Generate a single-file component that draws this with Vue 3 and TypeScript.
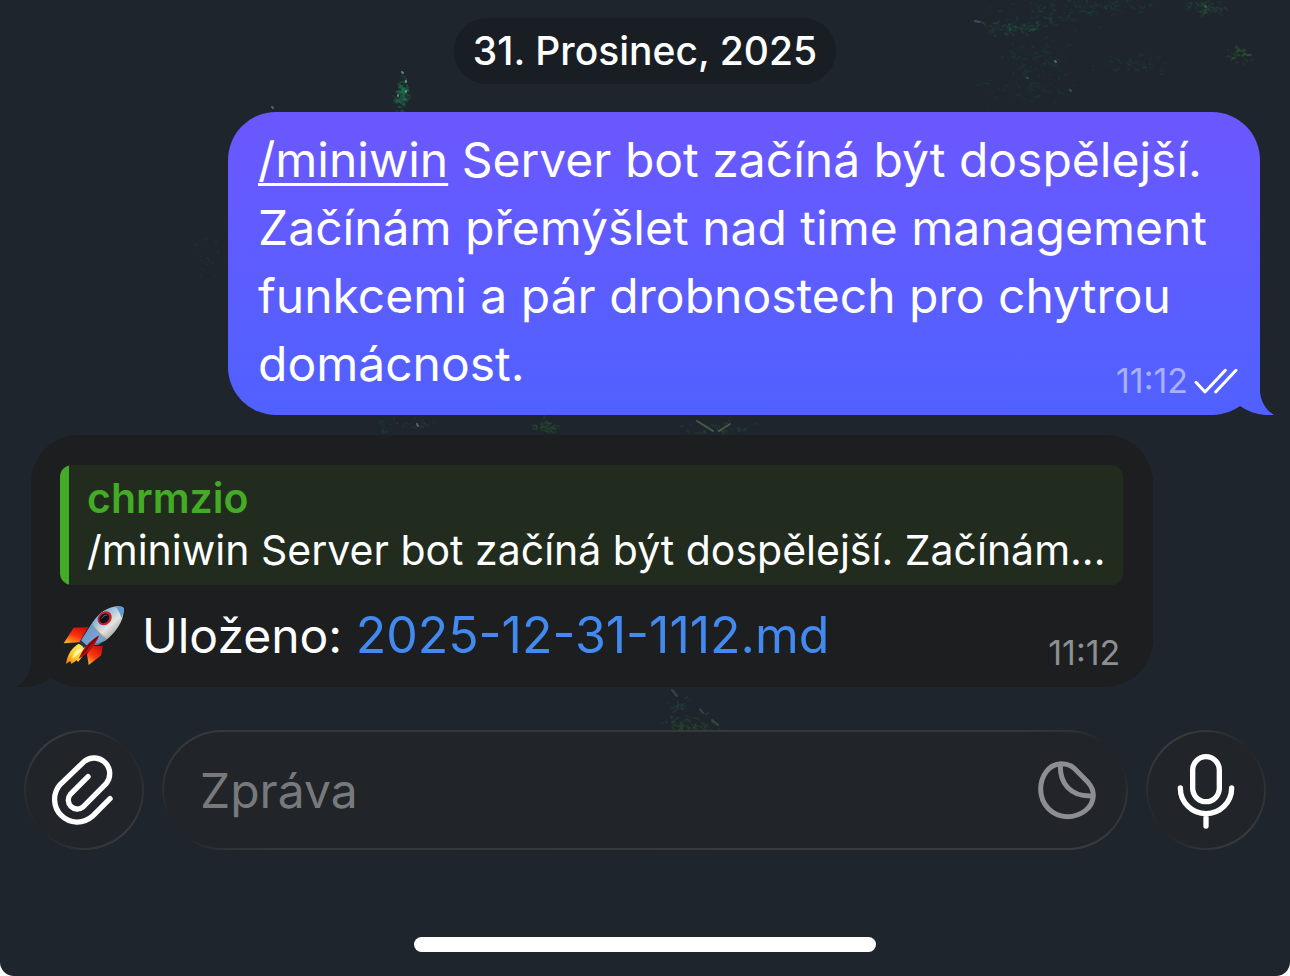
<script setup lang="ts">
import { ref } from 'vue'

interface Cluster { x: number; y: number; w: number; h: number; n: number; color: string; o: number }
interface Mark { d: string; color: string; o: number }

const draft = ref('')

const clusters: Cluster[] = [
  { x: 1045, y: 14, w: 60, h: 20, n: 70, color: '#1c5a40', o: 0.28 },
  { x: 1110, y: 6, w: 55, h: 10, n: 44, color: '#1c5a40', o: 0.3 },
  { x: 1008, y: 28, w: 34, h: 9, n: 50, color: '#1f6b4b', o: 0.32 },
  { x: 1040, y: 58, w: 40, h: 28, n: 80, color: '#1b4a38', o: 0.32 },
  { x: 1020, y: 88, w: 54, h: 20, n: 60, color: '#1c4a36', o: 0.32 },
  { x: 1130, y: 62, w: 44, h: 12, n: 40, color: '#1c4f38', o: 0.3 },
  { x: 1206, y: 8, w: 26, h: 9, n: 44, color: '#28633f', o: 0.32 },
  { x: 1240, y: 55, w: 15, h: 9, n: 30, color: '#2c6a38', o: 0.38 },
  { x: 403, y: 92, w: 5, h: 18, n: 40, color: '#1e7a54', o: 0.5 },
  { x: 403, y: 100, w: 11, h: 14, n: 36, color: '#1f6b4b', o: 0.5 },
  { x: 395, y: 425, w: 40, h: 9, n: 24, color: '#1f5a3e', o: 0.28 },
  { x: 542, y: 425, w: 20, h: 9, n: 30, color: '#2a6a34', o: 0.4 },
  { x: 715, y: 428, w: 44, h: 8, n: 28, color: '#1f5a3e', o: 0.34 },
  { x: 690, y: 724, w: 34, h: 10, n: 44, color: '#286030', o: 0.4 },
  { x: 680, y: 704, w: 14, h: 12, n: 14, color: '#2a5040', o: 0.4 },
  { x: 205, y: 255, w: 16, h: 22, n: 20, color: '#20452f', o: 0.3 },
]

const highlights: Mark[] = [
  { d: 'M697 421L713 431M719 431L730 424', color: '#6f8a68', o: 0.5 },
  { d: 'M672 690L677 696M700 709L703 713M712 720L718 725', color: '#6a7d70', o: 0.35 },
  { d: 'M402 72L403 73M406 81L406 82M398 95L398 96M406 91L406 92', color: '#9cc4ac', o: 0.6 },
  { d: 'M272 107L273 108M417 424L418 426M1055 61L1056 62', color: '#8ba699', o: 0.5 },
  { d: 'M975 21L979 22M1027 78L1028 78M1070 90L1071 91M1205 6L1206 7', color: '#7d9a8a', o: 0.35 },
]

let seed = 31
function rand(): number {
  seed = (seed * 16807) % 2147483647
  return seed / 2147483647
}

const marks: Mark[] = clusters.flatMap((c) =>
  Array.from({ length: c.n }, () => {
    const x = c.x + (rand() + rand() - 1) * c.w
    const y = c.y + (rand() + rand() - 1) * c.h
    const dx = (rand() - 0.5) * 8
    const dy = (rand() - 0.4) * 5
    return { d: `M${x.toFixed(1)} ${y.toFixed(1)}l${dx.toFixed(1)} ${dy.toFixed(1)}`, color: c.color, o: c.o * (0.4 + rand() * 0.6) }
  }),
).concat(highlights)
</script>

<template>
  <main class="chat">
    <svg class="wallpaper" viewBox="0 0 1290 976" preserveAspectRatio="xMidYMin slice" aria-hidden="true">
      <path v-for="(m, i) in marks" :key="i" :d="m.d" fill="none" :stroke="m.color" :opacity="m.o" stroke-width="2" stroke-linecap="round" />
    </svg>

    <section class="messages">
      <time class="date" datetime="2025-12-31">31. Prosinec, 2025</time>

      <article class="bubble outgoing">
        <p class="text"><a href="#miniwin">/miniwin</a> Server bot začíná být dospělejší. Začínám přemýšlet nad time management funkcemi a pár drobnostech pro chytrou domácnost.</p>
        <div class="meta">
          <time>11:12</time>
          <svg class="checks" viewBox="584 112 132 78" role="img" aria-label="Přečteno">
            <path d="M590 155L617 184L678 119M649 184L710 119" fill="none" stroke="#fff" stroke-width="9" stroke-linecap="round" stroke-linejoin="round" />
          </svg>
        </div>
        <svg class="tail" viewBox="0 0 62 60" aria-hidden="true">
          <path d="M48 0V37C49 47 54 55 62 60C50 61 38 58 28 51L20 30Z" fill="#5160ff" />
        </svg>
      </article>

      <article class="bubble incoming">
        <blockquote class="quote">
          <strong>chrmzio</strong>
          <span>/miniwin Server bot začíná být dospělejší. Začínám...</span>
        </blockquote>
        <div class="saved">
          <svg class="rocket" viewBox="66 42 186 186" role="img" aria-label="🚀">
            <defs>
              <linearGradient id="hull" x1="0" y1="0" x2="1" y2="1">
                <stop offset="0.1" stop-color="#4f86bf" />
                <stop offset="0.35" stop-color="#8db6dc" />
                <stop offset="0.58" stop-color="#e4e4e0" />
                <stop offset="0.9" stop-color="#77787a" />
              </linearGradient>
              <linearGradient id="fin" x1="0.8" y1="0" x2="0.2" y2="1">
                <stop offset="0" stop-color="#c90d08" />
                <stop offset="0.55" stop-color="#fb3510" />
                <stop offset="1" stop-color="#ffae28" />
              </linearGradient>
              <linearGradient id="flame" x1="1" y1="0" x2="0" y2="1">
                <stop offset="0" stop-color="#fff08a" />
                <stop offset="0.6" stop-color="#ffc928" />
                <stop offset="1" stop-color="#f07512" />
              </linearGradient>
            </defs>
            <path d="M145 108L101 110L71 157L118 154Z" fill="url(#fin)" />
            <path d="M188 165L184 193L146 222L141 190L155 164Z" fill="url(#fin)" />
            <path d="M116 158C98 168 82 188 78 219L91 210L94 219L110 208L114 213C128 198 136 183 138 170Z" fill="url(#flame)" />
            <path d="M112 174C104 184 98 193 97 202C110 197 120 187 127 175Z" fill="#fff6a0" />
            <path d="M117 154L124 148L140 161L132 172Z" fill="#26394f" />
            <path d="M251 52C250 47 240 45 232 46C202 48 176 66 158 94L124 148L142 164L194 150C228 126 253 88 251 52Z" fill="url(#hull)" />
            <path d="M124 148L158 94C166 112 184 135 201 144L176 161L142 164Z" fill="#5e94ca" opacity="0.8" />
            <path d="M158 98C169 118 184 132 203 140" fill="none" stroke="#d2b56a" stroke-width="3" />
            <path d="M251 52C250 47 240 45 226 47C234 54 241 66 244 81C249 70 252 62 251 52Z" fill="#5c9bd3" />
            <path d="M178 133C157 145 132 164 116 203C138 193 163 171 178 133Z" fill="#b80f10" />
            <path d="M173 139C155 154 139 172 126 190" fill="none" stroke="#5d0c12" stroke-width="4" />
            <ellipse cx="194" cy="82" rx="23" ry="19" transform="rotate(-43 194 82)" fill="#c71f27" />
            <ellipse cx="193" cy="82" rx="16" ry="13" transform="rotate(-43 193 82)" fill="#0e1218" />
            <path d="M185 83Q190 71 201 72" fill="none" stroke="#50627a" stroke-width="3" />
          </svg>
          <p class="text">Uloženo: <a href="#note">2025-12-31-1112.md</a></p>
        </div>
        <div class="meta"><time>11:12</time></div>
        <svg class="tail" viewBox="0 0 62 60" aria-hidden="true">
          <path d="M14 0V37C13 47 8 55 0 60C12 61 24 58 34 51L42 30Z" fill="#1c1e20" />
        </svg>
      </article>
    </section>

    <form class="composer" @submit.prevent>
      <button class="round" type="button" aria-label="Přiložit">
        <svg viewBox="72 90 360 360" fill="none" stroke="#fff" stroke-width="16" stroke-linecap="round" stroke-linejoin="round">
          <path d="M264 230L211 283A27 27 0 0 0 249 321L319 250A47 47 0 0 0 253 184L181 253A68 68 0 0 0 277 349L330 296" />
        </svg>
      </button>
      <div class="field">
        <input v-model="draft" type="text" placeholder="Zpráva" aria-label="Zpráva" />
        <button class="sticker" type="button" aria-label="Samolepky">
          <svg viewBox="232 182 180 180" fill="none" stroke="#8d8e93" stroke-width="15" stroke-linecap="round" stroke-linejoin="round">
            <path d="M305 193C270 193 243 228 243 270C243 316 279 352 323 352C364 352 400 325 401 288C401 272 395 260 385 249L345 208C334 198 322 193 305 193Z" />
            <path d="M302 195C300 250 330 293 398 290" />
          </svg>
        </button>
      </div>
      <button class="round" type="button" aria-label="Hlasová zpráva">
        <svg viewBox="558 90 360 360" fill="none" stroke="#fff" stroke-width="16" stroke-linecap="round">
          <rect x="698" y="170" width="80" height="135" rx="40" />
          <path d="M661 264A77 77 0 0 0 815 264M738 341V378" />
        </svg>
      </button>
    </form>

    <div class="home"></div>
  </main>
</template>

<style>
body {
  margin: 0;
  background: #fff;
}
</style>

<style scoped>
.chat {
  position: relative;
  box-sizing: border-box;
  min-height: 100vh;
  display: flex;
  flex-direction: column;
  padding: 18px 0 24px;
  overflow: hidden;
  border-radius: 0 0 14px 14px;
  background: #1f252c;
  color: #fff;
  font-family: Inter, "Liberation Sans", sans-serif;
}
.wallpaper {
  position: absolute;
  inset: 0;
  width: 100%;
  height: 100%;
}
.messages {
  position: relative;
  display: flex;
  flex-direction: column;
}
.date {
  align-self: center;
  padding: 0 19px;
  border-radius: 33px;
  background: #181e24;
  font-size: 39px;
  font-weight: 500;
  line-height: 66px;
}
.bubble {
  position: relative;
  box-sizing: border-box;
  border-radius: 48px;
}
.text {
  margin: 0;
  font-size: 48px;
  line-height: 68px;
}
.outgoing {
  align-self: flex-end;
  width: 80%;
  margin: 28px 30px 0 0;
  padding: 14px 30px 17px;
  background: linear-gradient(#6b58ff, #5061ff);
}
.outgoing a {
  color: #fff;
  text-decoration-thickness: 3px;
  text-underline-offset: 6px;
}
.meta {
  position: absolute;
  right: 33px;
  bottom: 14px;
  display: flex;
  align-items: center;
  gap: 6px;
  font-size: 34px;
  line-height: 40px;
  color: #8e8f92;
}
.outgoing .meta {
  right: 22px;
  color: #a9b0ff;
}
.checks {
  width: 44px;
  height: 26px;
}
.tail {
  position: absolute;
  bottom: 0;
  width: 62px;
  height: 60px;
}
.outgoing .tail {
  right: -14px;
}
.incoming .tail {
  left: -14px;
}
.incoming {
  width: 87%;
  margin: 20px 0 0 31px;
  padding: 30px 30px 17px 29px;
  background: #1c1e20;
}
.quote {
  margin: 0;
  padding: 7px 12px 9px 27px;
  border-radius: 12px;
  background: linear-gradient(90deg, #43ab25 9px, #212b1e 9px);
  font-size: 41px;
  line-height: 52px;
}
.quote strong,
.quote span {
  display: block;
  white-space: nowrap;
}
.quote strong {
  color: #43ab25;
  font-weight: 600;
}
.saved {
  display: flex;
  align-items: center;
  gap: 18px;
  padding: 16px 0 0 2px;
}
.rocket {
  width: 62px;
  height: 62px;
}
.saved a {
  color: #438af0;
  font-size: 50px;
  text-decoration: none;
}
.composer {
  position: relative;
  display: flex;
  gap: 18px;
  margin-top: 43px;
  padding: 0 24px;
}
button {
  display: flex;
  align-items: center;
  justify-content: center;
  flex: none;
  margin: 0;
  padding: 0;
  border: 0;
  background: none;
}
.round,
.field {
  box-sizing: border-box;
  height: 120px;
  border: 2px solid transparent;
  border-radius: 60px;
}
.round {
  width: 120px;
  background:
    linear-gradient(#212428, #212428) padding-box,
    conic-gradient(#34373a, #212428 45deg, #2c2f32 80deg, #393b3e 135deg, #303336 190deg, #202327 225deg, #2c2f32 270deg, #393b3e 315deg, #34373a) border-box;
}
.round svg {
  flex: none;
  width: 120px;
  height: 120px;
}
.field {
  flex: 1;
  min-width: 0;
  display: flex;
  align-items: center;
  padding: 0 29px 0 36px;
  background:
    linear-gradient(#212428, #212428) padding-box,
    conic-gradient(#36393c 81deg, #212428 84deg, #212428 87deg, #303336 91deg, #393b3e 97deg, #36393c 261deg, #212428 264deg, #212428 267deg, #303336 271deg, #36393c 277deg) border-box;
}
.field input {
  flex: 1;
  min-width: 0;
  height: 68px;
  padding: 0;
  border: 0;
  outline: 0;
  background: none;
  color: #fff;
  font: 48px Inter, "Liberation Sans", sans-serif;
}
.field input::placeholder {
  color: #77797c;
  opacity: 1;
}
.sticker svg {
  width: 60px;
  height: 60px;
}
.home {
  position: relative;
  align-self: center;
  width: 462px;
  height: 15px;
  margin-top: auto;
  border-radius: 8px;
  background: #fff;
}
</style>
